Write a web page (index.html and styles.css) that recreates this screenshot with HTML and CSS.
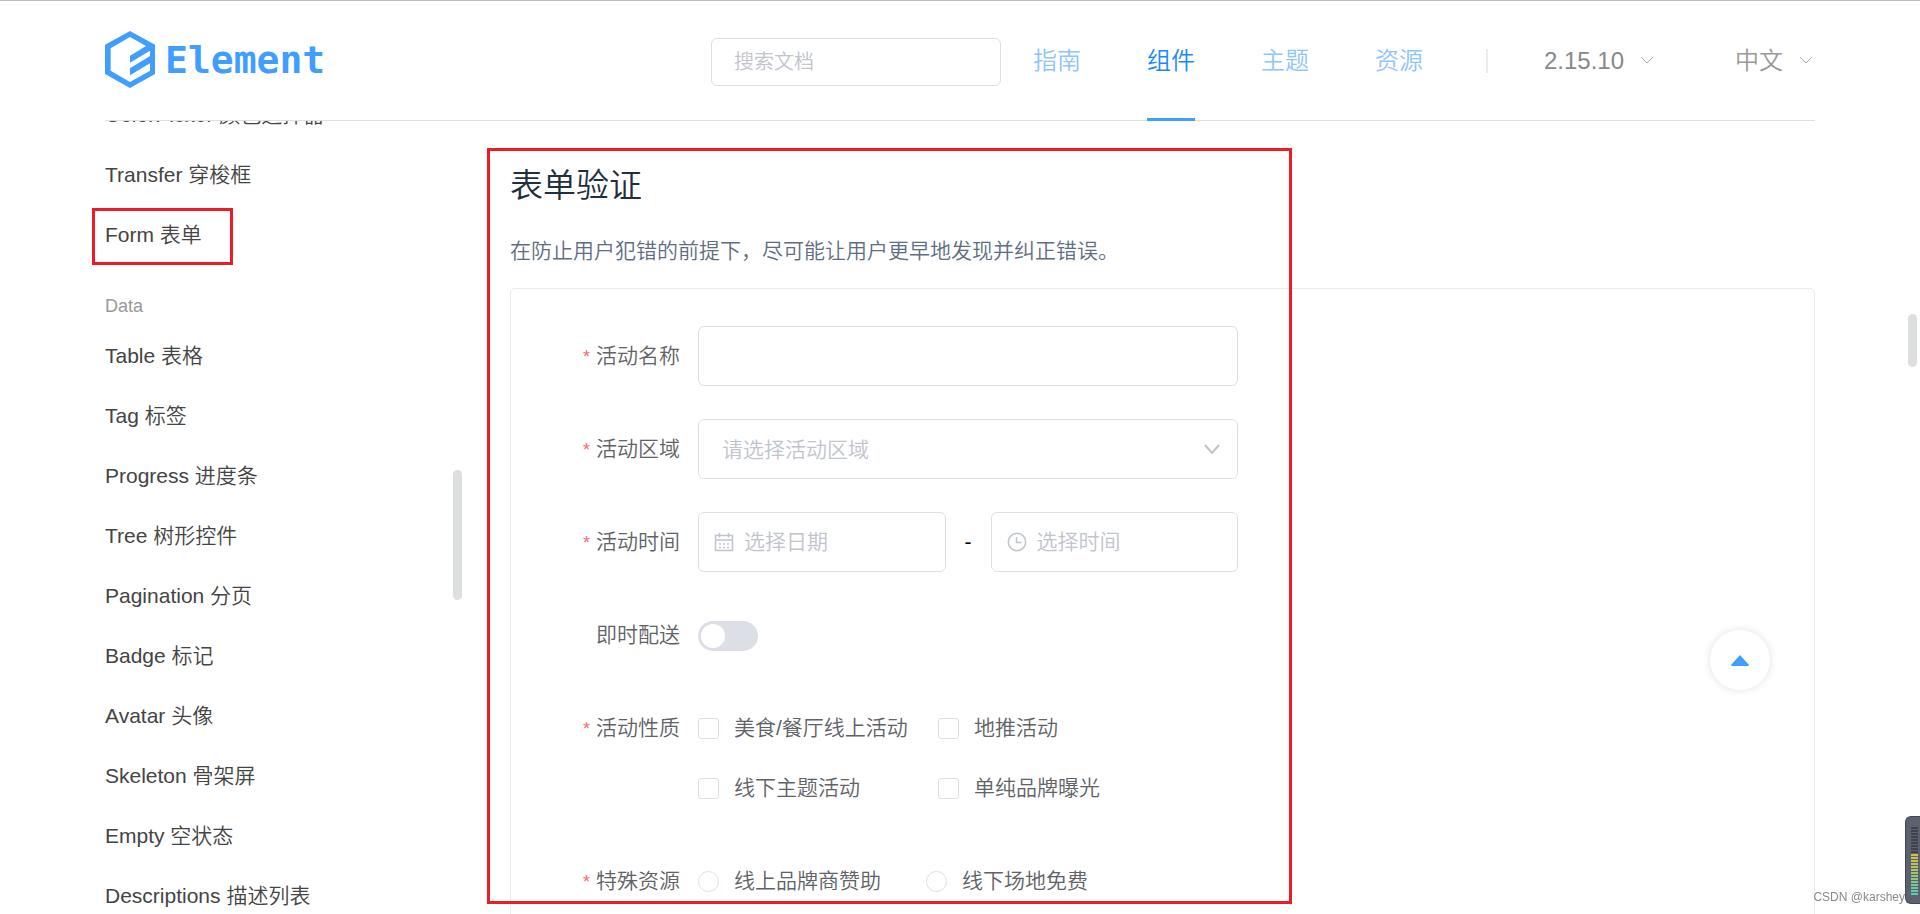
FILE: index.html
```html
<!DOCTYPE html>
<html lang="zh-CN">
<head>
<meta charset="utf-8">
<title>Element - 表单验证</title>
<link rel="stylesheet" href="styles.css">
</head>
<body>
<header class="header">
  <div class="header-inner">
    <a class="logo" href="#">
      <svg class="logo-mark" viewBox="75 93 150 171" aria-hidden="true"><path fill="#409eff" fill-rule="evenodd" d="M150 93 225 134V222L150 264 75 222V134ZM150 111 92 145V212L150 246 210 212V190L150 226V205L210 168V152L150 188V167L198 138Z"/></svg>
      <span class="logo-word">Element</span>
    </a>
    <input class="search" type="text" placeholder="搜索文档" aria-label="搜索文档">
    <nav class="nav">
      <a href="#">指南</a>
      <a class="active" href="#">组件</a>
      <a href="#">主题</a>
      <a href="#">资源</a>
    </nav>
    <span class="divider"></span>
    <button class="picker version" type="button">2.15.10<svg class="caret" viewBox="0 0 14 14"><path d="M1 3 7 9 13 3"/></svg></button>
    <button class="picker lang" type="button">中文<svg class="caret" viewBox="0 0 14 14"><path d="M1 3 7 9 13 3"/></svg></button>
  </div>
</header>

<div class="page">
  <aside class="sidebar">
    <ul class="menu">
      <li><a href="#">ColorPicker 颜色选择器</a></li>
      <li><a href="#">Transfer 穿梭框</a></li>
      <li class="marked"><a href="#">Form 表单</a></li>
      <li class="group">Data</li>
      <li><a href="#">Table 表格</a></li>
      <li><a href="#">Tag 标签</a></li>
      <li><a href="#">Progress 进度条</a></li>
      <li><a href="#">Tree 树形控件</a></li>
      <li><a href="#">Pagination 分页</a></li>
      <li><a href="#">Badge 标记</a></li>
      <li><a href="#">Avatar 头像</a></li>
      <li><a href="#">Skeleton 骨架屏</a></li>
      <li><a href="#">Empty 空状态</a></li>
      <li><a href="#">Descriptions 描述列表</a></li>
    </ul>
    <span class="thumb side-thumb"></span>
  </aside>

  <main class="content">
    <h3 class="title">表单验证</h3>
    <p class="intro">在防止用户犯错的前提下，尽可能让用户更早地发现并纠正错误。</p>
    <section class="demo">
      <form class="form">
        <div class="row">
          <label class="label required" for="name">活动名称</label>
          <input class="field" id="name" type="text">
        </div>
        <div class="row">
          <label class="label required" for="region">活动区域</label>
          <div class="control">
            <select class="field select" id="region"><option>请选择活动区域</option></select>
            <svg class="select-caret" viewBox="0 0 16 16"><path d="M1 4 8 12 15 4"/></svg>
          </div>
        </div>
        <div class="row">
          <label class="label required" for="date">活动时间</label>
          <div class="times">
            <div class="control">
              <svg class="prefix" viewBox="0 0 20 20"><path d="M1.5 3.5H18.5V18.5H1.5ZM1.5 8H18.5M5.500 1V5.500M14.500 1V5.500M5 12H7M9 12H11M13 12H15M5 15.500H7M9 15.500H11M13 15.500H15"/></svg>
              <input class="field with-icon" id="date" type="text" placeholder="选择日期">
            </div>
            <span class="dash">-</span>
            <div class="control">
              <svg class="prefix" viewBox="0 0 20 20"><circle cx="10" cy="10" r="8.700"/><path d="M9.500 5V10.500H14.500"/></svg>
              <input class="field with-icon" type="text" placeholder="选择时间" aria-label="选择时间">
            </div>
          </div>
        </div>
        <div class="row">
          <label class="label" for="delivery">即时配送</label>
          <input class="switch" id="delivery" type="checkbox" role="switch">
        </div>
        <div class="row" role="group" aria-labelledby="type-label">
          <span class="label required" id="type-label">活动性质</span>
          <div class="checks">
            <label class="choice"><input class="box" type="checkbox">美食/餐厅线上活动</label>
            <label class="choice"><input class="box" type="checkbox">地推活动</label>
            <label class="choice"><input class="box" type="checkbox">线下主题活动</label>
            <label class="choice"><input class="box" type="checkbox">单纯品牌曝光</label>
          </div>
        </div>
        <div class="row" role="radiogroup" aria-labelledby="res-label">
          <span class="label required" id="res-label">特殊资源</span>
          <div class="radios">
            <label class="choice"><input class="box round" type="radio" name="resource">线上品牌商赞助</label>
            <label class="choice"><input class="box round" type="radio" name="resource">线下场地免费</label>
          </div>
        </div>
      </form>
    </section>
    <span class="frame"></span>
  </main>
</div>

<button class="back-top" type="button" aria-label="回到顶部"><svg viewBox="0 0 18 11"><path fill="#409eff" d="M9 0 18 10Q18 11 17 11H1Q0 11 0 10Z"/></svg></button>
<span class="thumb page-thumb"></span>
<span class="watermark">CSDN @karshey</span>
<span class="meter"><span class="meter-off"></span><span class="meter-on"></span></span>
</body>
</html>
```
FILE: styles.css
```css
*, *::before, *::after { box-sizing: border-box; }

body {
  margin: 0;
  height: 100vh;
  overflow: hidden;
  background: #fff;
  font-family: "Liberation Sans", "Noto Sans CJK SC", sans-serif;
  font-size: 21px;
  font-weight: 350;
  color: #606266;
}

a { color: inherit; text-decoration: none; }
input, select, button { font: inherit; color: inherit; margin: 0; }

/* Header */
.header {
  position: relative;
  z-index: 2;
  padding: 0 105px;
  background: #fff;
  border-top: 1px solid #bbb;
}
.header-inner {
  display: flex;
  align-items: center;
  height: 120px;
  border-bottom: 1px solid #dcdfe6;
}
.logo { display: flex; align-items: center; gap: 10px; height: 57px; margin-bottom: 2px; }
.logo-mark { width: 50px; height: 57px; }
.logo-word {
  font-family: "DejaVu Sans Mono", monospace;
  font-size: 38px;
  font-weight: 700;
  line-height: 56px;
  color: #409eff;
}
.search {
  width: 290px;
  height: 48px;
  margin-top: 2px;
  margin-left: auto;
  padding: 2px 22px 0;
  border: 1px solid #dcdfe6;
  border-radius: 6px;
  font-size: 20px;
  outline: 0;
}
::placeholder { color: #c0c4cc; opacity: 1; }
.nav { display: flex; gap: 66px; margin-left: 32px; font-size: 24px; }
.nav a {
  height: 120px;
  line-height: 120px;
  color: #8cc5ff;
}
.nav .active { color: #1989fa; border-bottom: 3px solid #409eff; }
.divider { width: 2px; height: 24px; margin-left: 63px; background: #ebebeb; }
.picker {
  display: flex;
  align-items: center;
  padding: 0;
  border: 0;
  background: none;
  font-size: 24px;
  line-height: 34px;
  color: #888;
}
.version { gap: 16px; margin-left: 56px; }
.lang { gap: 16px; margin-left: 81px; padding-right: 2px; color: #999; }
.caret { width: 14px; height: 14px; fill: none; stroke: #aaa; }

/* Sidebar */
.page { display: flex; padding: 0 105px; }
.sidebar { position: relative; flex: 0 0 360px; }
.menu {
  margin: -36px 0 0;
  padding: 0;
  list-style: none;
  line-height: 60px;
  color: #444;
}
.menu li { position: relative; }
.menu .group { padding-top: 22px; font-size: 18px; line-height: 39px; color: #999; }
.marked::after {
  content: "";
  position: absolute;
  left: -13px;
  top: 3px;
  width: 141px;
  height: 57px;
  border: 3px solid #ed1c24;
}
.thumb { width: 9px; border-radius: 5px; background: #dddee0; }
.side-thumb { position: absolute; right: 3px; top: 349px; height: 130px; }

/* Content */
.content { position: relative; flex: 1; padding: 40px 0 0 45px; }
.title { margin: 0; font-size: 33px; font-weight: 350; line-height: 50px; color: #1f2f3d; }
.intro { margin: 23px 0 20px; line-height: 34px; color: #5e6d82; }
.demo { padding: 37px 35px; border: 1px solid #ebebeb; border-radius: 5px; }
.form { display: flex; flex-direction: column; gap: 33px; max-width: 692px; }
.row { display: flex; align-items: flex-start; }
.label { flex: 0 0 152px; padding-right: 18px; line-height: 60px; text-align: right; }
.required::before { content: "*"; margin-right: 6px; font-size: 18px; line-height: 18px; color: #f56c6c; }
.control { position: relative; flex: 1; min-width: 0; }
.field {
  display: block;
  flex: 1;
  width: 100%;
  height: 60px;
  padding: 0 23px;
  border: 1px solid #dcdfe6;
  border-radius: 6px;
  background: #fff;
  outline: 0;
}
.select { appearance: none; color: #c0c4cc; }
.with-icon { padding-left: 45px; }
.select-caret {
  position: absolute;
  right: 18px;
  top: 22px;
  width: 16px;
  height: 16px;
  fill: none;
  stroke: #c0c4cc;
  stroke-width: 2;
}
.prefix {
  position: absolute;
  left: 16px;
  top: 20px;
  width: 20px;
  height: 20px;
  fill: none;
  stroke: #c0c4cc;
  stroke-width: 1.5;
}
.times { display: flex; flex: 1; align-items: center; }
.dash { width: 45px; text-align: center; color: #000; }
.switch {
  appearance: none;
  width: 60px;
  height: 30px;
  margin-top: 16px;
  padding: 3px;
  border-radius: 15px;
  background: #dcdfe6;
}
.switch::before {
  content: "";
  display: block;
  width: 24px;
  height: 24px;
  border-radius: 50%;
  background: #fff;
}
.checks { display: grid; grid-template-columns: 240px 240px; }
.radios { display: flex; gap: 45px; }
.choice { display: flex; align-items: center; gap: 15px; height: 60px; line-height: 60px; }
.box {
  appearance: none;
  width: 21px;
  height: 21px;
  border: 1px solid #dcdfe6;
  border-radius: 3px;
  background: #fff;
}
.round { border-radius: 50%; }
.frame {
  position: absolute;
  left: 22px;
  top: 27px;
  width: 805px;
  height: 756px;
  border: 3px solid #ed1c24;
  pointer-events: none;
}

/* Floating items */
.back-top {
  position: fixed;
  right: 150px;
  bottom: 224px;
  display: flex;
  align-items: center;
  justify-content: center;
  width: 60px;
  height: 60px;
  padding: 0;
  border: 0;
  border-radius: 50%;
  background: #fff;
  box-shadow: 0 0 9px rgba(0, 0, 0, .12);
}
.back-top svg { width: 18px; height: 11px; }
.page-thumb { position: fixed; right: 3px; top: 314px; height: 53px; }
.meter {
  position: fixed;
  right: 0;
  bottom: 10px;
  display: flex;
  flex-direction: column;
  width: 15px;
  height: 88px;
  padding: 10px 2px 8px 5px;
  border: 1px solid #444854;
  border-right: 0;
  border-radius: 6px 0 0 6px;
  background: #5c6170;
}
.meter-off { height: 27px; background: repeating-linear-gradient(#3e424d 0 2px, #5c6170 2px 3px); }
.meter-on {
  flex: 1;
  background:
    repeating-linear-gradient(transparent 0 2px, #5c6170 2px 3px),
    linear-gradient(#d8c04a, #a9c766 40%, #52cdb4);
}
.watermark {
  position: fixed;
  right: 15px;
  bottom: 9px;
  font-size: 12px;
  line-height: 16px;
  color: #888;
}
```
